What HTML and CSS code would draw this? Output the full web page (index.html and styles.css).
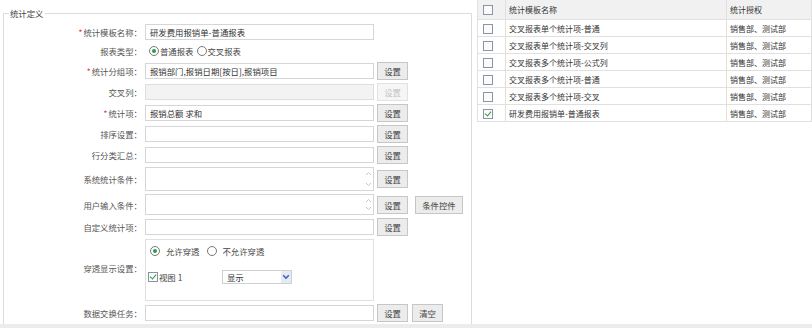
FILE: index.html
```html
<!DOCTYPE html>
<html lang="zh">
<head>
    <meta charset="UTF-8">
    <title>统计定义</title>
    <link rel="stylesheet" href="styles.css">
</head>
<body>

<div class="page">
    <fieldset class="define">
        <legend>统计定义</legend>

        <div class="form-grid">
            <label class="lbl r1"><span class="req">*</span>统计模板名称：</label>
            <div class="field r1"><div class="input">研发费用报销单-普通报表</div></div>

            <label class="lbl r2">报表类型：</label>
            <div class="field r2 radios">
                <span class="radio on"></span><span class="opt-tight">普通报表</span>
                <span class="radio"></span><span>交叉报表</span>
            </div>

            <label class="lbl r3"><span class="req">*</span>统计分组项：</label>
            <div class="field r3"><div class="input">报销部门,报销日期[按日],报销项目</div><button class="btn">设置</button></div>

            <label class="lbl r4">交叉列：</label>
            <div class="field r4"><div class="input disabled"></div><button class="btn disabled">设置</button></div>

            <label class="lbl r5"><span class="req">*</span>统计项：</label>
            <div class="field r5"><div class="input">报销总额 求和</div><button class="btn">设置</button></div>

            <label class="lbl r6">排序设置：</label>
            <div class="field r6"><div class="input"></div><button class="btn">设置</button></div>

            <label class="lbl r7">行分类汇总：</label>
            <div class="field r7"><div class="input"></div><button class="btn">设置</button></div>

            <label class="lbl r8">系统统计条件：</label>
            <div class="field r8">
                <div class="input area">
                    <div class="scroll">
                        <svg width="7" height="5" viewBox="0 0 7 5"><path d="M1 4 L3.5 1.5 L6 4" fill="none" stroke="#c8c8c8" stroke-width="1"/></svg>
                        <svg width="7" height="5" viewBox="0 0 7 5"><path d="M1 1 L3.5 3.5 L6 1" fill="none" stroke="#c8c8c8" stroke-width="1"/></svg>
                    </div>
                </div>
                <button class="btn">设置</button>
            </div>

            <label class="lbl r9">用户输入条件：</label>
            <div class="field r9">
                <div class="input area">
                    <div class="scroll">
                        <svg width="7" height="5" viewBox="0 0 7 5"><path d="M1 4 L3.5 1.5 L6 4" fill="none" stroke="#c8c8c8" stroke-width="1"/></svg>
                        <svg width="7" height="5" viewBox="0 0 7 5"><path d="M1 1 L3.5 3.5 L6 1" fill="none" stroke="#c8c8c8" stroke-width="1"/></svg>
                    </div>
                </div>
                <button class="btn">设置</button>
                <button class="btn wide">条件控件</button>
            </div>

            <label class="lbl r10">自定义统计项：</label>
            <div class="field r10"><div class="input"></div><button class="btn">设置</button></div>

            <label class="lbl r11">穿透显示设置：</label>
            <div class="field r11">
                <div class="drill">
                    <div class="radios">
                        <span class="radio on"></span><span class="opt">允许穿透</span>
                        <span class="radio"></span><span class="opt">不允许穿透</span>
                    </div>
                    <div class="view-row">
                        <span class="check on"></span><span class="view-name">视图 1</span>
                        <div class="select">
                            <span>显示</span>
                            <span class="arrow">
                                <svg width="8" height="6" viewBox="0 0 8 6"><path d="M1.2 1.2 L4 4.2 L6.8 1.2" fill="none" stroke="#3a63b8" stroke-width="1.6"/></svg>
                            </span>
                        </div>
                    </div>
                </div>
            </div>

            <label class="lbl r12">数据交换任务：</label>
            <div class="field r12"><div class="input"></div><button class="btn">设置</button><button class="btn">清空</button></div>
        </div>
    </fieldset>

    <div class="list">
        <table>
            <thead>
                <tr><th class="c-check"><span class="check"></span></th><th class="c-name">统计模板名称</th><th class="c-auth">统计授权</th></tr>
            </thead>
            <tbody>
                <tr><td class="c-check"><span class="check"></span></td><td>交叉报表单个统计项-普通</td><td>销售部、测试部</td></tr>
                <tr><td class="c-check"><span class="check"></span></td><td>交叉报表单个统计项-交叉列</td><td>销售部、测试部</td></tr>
                <tr><td class="c-check"><span class="check"></span></td><td>交叉报表多个统计项-公式列</td><td>销售部、测试部</td></tr>
                <tr><td class="c-check"><span class="check"></span></td><td>交叉报表多个统计项-普通</td><td>销售部、测试部</td></tr>
                <tr><td class="c-check"><span class="check"></span></td><td>交叉报表多个统计项-交叉</td><td>销售部、测试部</td></tr>
                <tr><td class="c-check"><span class="check on"></span></td><td>研发费用报销单-普通报表</td><td>销售部、测试部</td></tr>
            </tbody>
        </table>
    </div>
</div>

</body>
</html>
```

FILE: styles.css
```css
html {
    background-color: #ececec;
}

body {
    margin: 0;
    padding: 0;
    font-family: "Noto Sans CJK SC", "Liberation Sans", sans-serif;
    font-size: 8.4px;
    color: #444;
}

.page {
    height: 324px;
    background-color: #fff;
    display: flex;
    align-items: flex-start;
    overflow: hidden;
}

/* left: form */
.define {
    margin: 8px 0 0 3px;
    padding: 0;
    width: 469px;
    height: 340px;
    border: 1px solid #dcdcdc;
    border-bottom: none;
    box-sizing: border-box;
}

.define legend {
    margin-left: 5px;
    padding: 0 1px;
    line-height: 11px;
    color: #444;
}

.form-grid {
    display: grid;
    grid-template-columns: 138px 1fr;
    grid-template-rows: 17px 16px 18px 18px 18px 18px 18px 24px 21px 18px 62px 18px;
    row-gap: 3px;
    column-gap: 3px;
    margin-top: 4px;
}

.lbl {
    display: flex;
    align-items: center;
    justify-content: flex-end;
    color: #555;
}

.lbl.r11 {
    align-items: flex-start;
    padding-top: 23px;
}

.req {
    color: #e33;
    margin-right: 1px;
}

.field {
    display: flex;
    align-items: center;
    gap: 3px;
}

.field.radios {
    gap: 0;
}

.input {
    width: 229px;
    height: 16px;
    box-sizing: border-box;
    border: 1px solid #d6d6d6;
    background: #fff;
    padding: 0 4px;
    line-height: 14px;
    color: #333;
    white-space: nowrap;
    overflow: hidden;
}

.input.disabled {
    background: #f3f3f3;
    border-color: #dedede;
}

.input.area {
    height: 100%;
    display: flex;
    justify-content: flex-end;
    padding: 0 1px 0 0;
}

.scroll {
    display: flex;
    flex-direction: column;
    justify-content: space-between;
    padding: 3px 0;
}

.btn {
    width: 31px;
    height: 18px;
    padding: 0;
    border: 1px solid #c6c6c6;
    background: #ececec;
    font-family: inherit;
    font-size: 8.4px;
    color: #444;
}

.btn.disabled {
    color: #c4c4c4;
    background: #f6f6f6;
    border-color: #e2e2e2;
}

.btn.wide {
    width: 48px;
    margin-left: 4px;
}

.r12 .btn + .btn {
    margin-left: 1px;
}

.radios {
    display: flex;
    align-items: center;
    padding-left: 4px;
    color: #444;
}

.opt-tight {
    margin-right: 3px;
}

.radio {
    width: 8px;
    height: 8px;
    border: 1px solid #777;
    border-radius: 50%;
    background: #fff;
    margin-right: 1px;
    position: relative;
}

.radio.on::after {
    content: "";
    position: absolute;
    left: 2px;
    top: 2px;
    width: 4px;
    height: 4px;
    border-radius: 50%;
    background: #2c9a4a;
}

.drill {
    width: 229px;
    height: 62px;
    box-sizing: border-box;
    border: 1px solid #e0e0e0;
}

.drill .radios {
    margin-top: 5px;
    padding-left: 4px;
}

.drill .opt {
    margin-left: 5px;
    margin-right: 7px;
}

.view-row {
    display: flex;
    align-items: center;
    margin-top: 13px;
    padding-left: 2px;
}

.view-name {
    margin-left: 1px;
    width: 63px;
}

.select {
    width: 70px;
    height: 14px;
    box-sizing: border-box;
    border: 1px solid #cfcfcf;
    display: flex;
    align-items: center;
    justify-content: space-between;
    padding: 0 0 0 4px;
    color: #333;
}

.arrow {
    display: flex;
    align-items: center;
    justify-content: center;
    width: 10px;
    height: 12px;
    background: #e4ebf7;
}

.check {
    display: inline-block;
    width: 8px;
    height: 8px;
    border: 1px solid #8a94a4;
    background: #fbfbfb;
    vertical-align: middle;
    position: relative;
}

.check.on::after {
    content: "";
    position: absolute;
    left: 2px;
    top: 0;
    width: 3px;
    height: 5px;
    border: solid #2c9a4a;
    border-width: 0 1.5px 1.5px 0;
    transform: rotate(40deg);
}

/* right: list */
.list {
    margin-left: 5px;
    flex: 1;
}

table {
    width: 100%;
    border-collapse: collapse;
    color: #333;
    font-size: 8px;
}

th, td {
    border: 1px solid #e0e0e0;
    height: 16px;
    padding: 0 3px;
    text-align: left;
    font-weight: normal;
    white-space: nowrap;
}

thead th {
    height: 19px;
    background: #f1f1f1;
    border-top: none;
}

.c-check {
    width: 19px;
    padding-left: 5px;
}

.c-auth {
    width: 78px;
}
```
